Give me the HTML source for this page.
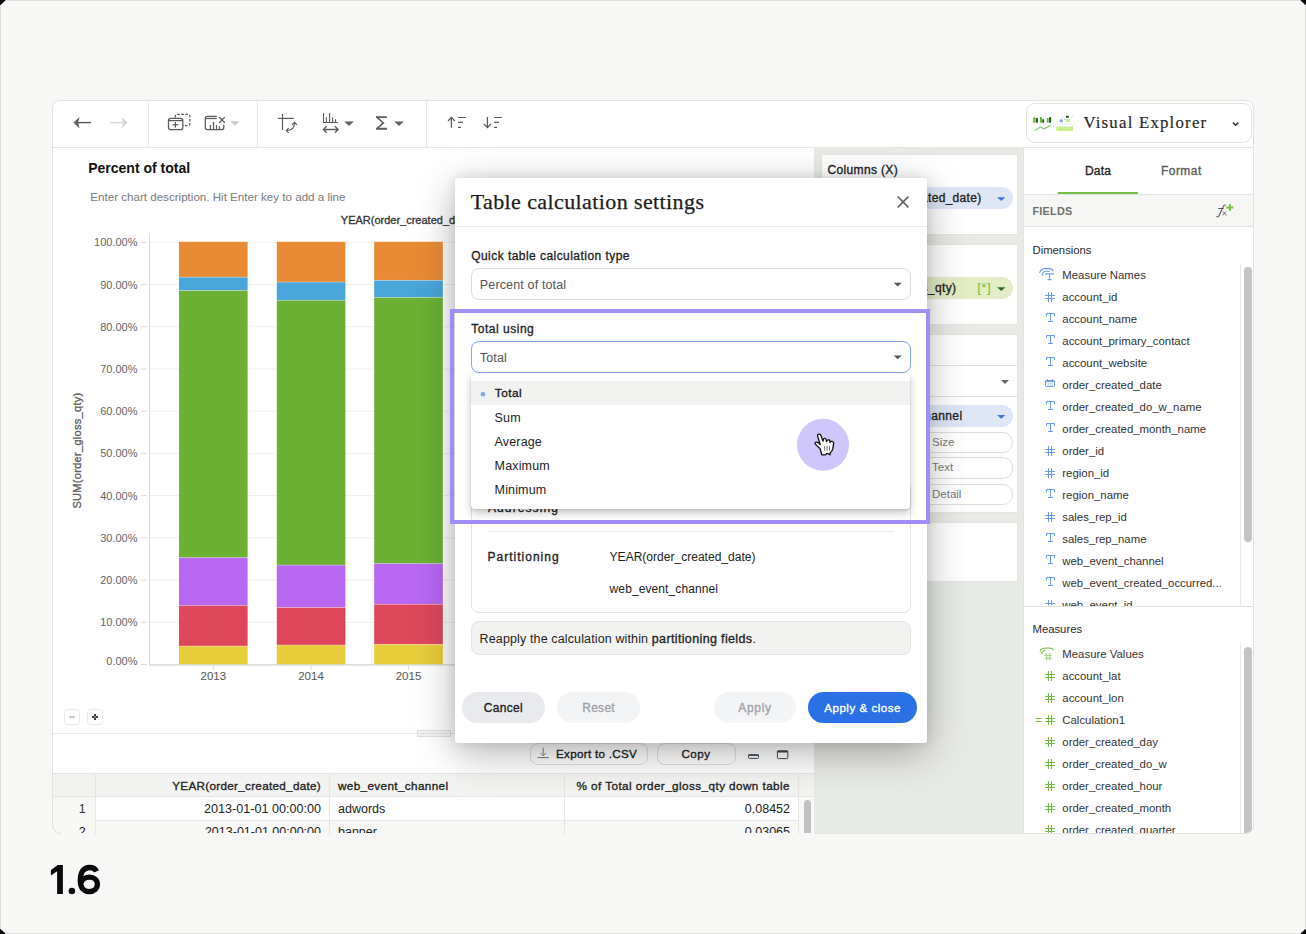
<!DOCTYPE html>
<html><head><meta charset="utf-8">
<style>
*{box-sizing:border-box;margin:0;padding:0}
html,body{width:1306px;height:934px;overflow:hidden;background:#000}
body{font-family:"Liberation Sans",sans-serif;color:#222;position:relative}
.a{position:absolute}
.t{position:absolute;white-space:nowrap;line-height:1}
svg{position:absolute;overflow:visible}
</style></head>
<body>

<div class="a" style="left:0px;top:0px;width:1306px;height:934px;background:#f7f7f5;border:1px solid #dcdedb;clip-path:polygon(6px 0,1300px 0,1306px 5.5px,1306px 928.5px,1300px 934px,6px 934px,0 928.5px,0 5.5px)"></div>
<svg style="left:0;top:0" width="120" height="934">
 <path d="M50.9 869.9 L57.9 865.1 L62.9 865.1 L62.9 894 L57.1 894 L57.1 871.3 L50.9 875.4 Z" fill="#0a0a0a"/>
 <circle cx="71.9" cy="891" r="3.3" fill="#0a0a0a"/>
 <path d="M96.6 871.4 C95.2 868.6 92.6 867.5 89.4 867.5 C83.3 867.5 80.3 872.6 80.3 880.5 C80.3 888 83.8 891.6 89 891.6 C94.2 891.6 97.4 888.3 97.4 884.3 C97.4 880 94.3 877.1 89.5 877.1 C85.5 877.1 82 879.5 80.9 883" fill="none" stroke="#0a0a0a" stroke-width="5.3"/>
</svg>
<div class="a" style="left:52px;top:100px;width:1202px;height:734px;background:#fff;border:1px solid #e1e3df;border-radius:8px"></div>
<div class="a" style="left:53px;top:147px;width:1200px;height:1px;background:#e6e7e3"></div>
<div class="a" style="left:148px;top:101px;width:1px;height:46px;background:#e6e7e3"></div>
<div class="a" style="left:257px;top:101px;width:1px;height:46px;background:#e6e7e3"></div>
<div class="a" style="left:426px;top:101px;width:1px;height:46px;background:#e6e7e3"></div>
<div class="a" style="left:1026px;top:103px;width:226px;height:40px;border:1px solid #e1e3df;border-radius:9px;background:#fff"></div>
<div class="t" style="top:114.73px;font-size:16.8px;color:#262626;letter-spacing:1.22px;font-family:'Liberation Serif',serif;left:1083.4px;-webkit-text-stroke:0.15px #262626;">Visual Explorer</div>
<svg style="left:0;top:0" width="1306" height="150">
 <path d="M1233 122.6 L1235.7 125.3 L1238.4 122.6" fill="none" stroke="#333" stroke-width="1.5"/>
 <line x1="1031" y1="123.9" x2="1076" y2="123.9" stroke="#eeefec" stroke-width="0.8"/>
 <line x1="1053.3" y1="115.2" x2="1053.3" y2="131" stroke="#eeefec" stroke-width="0.8"/>
 <g fill="#62bd33"><rect x="1033.2" y="117.2" width="2" height="5.5"/><rect x="1040" y="117" width="2" height="5.7"/><rect x="1046.7" y="118" width="1.9" height="4.7"/></g>
 <g fill="#1d4f26"><rect x="1035.8" y="118" width="2" height="4.7"/><rect x="1042.3" y="119.2" width="1.8" height="3.5"/><rect x="1049.1" y="117.2" width="2" height="5.5"/></g>
 <path d="M1036 130.3 L1040.4 125.6 L1045.1 130.3 L1049.9 125.1" fill="none" stroke="#cfdcf6" stroke-width="0.8"/>
 <path d="M1034.4 130.5 L1040.4 127.3 L1044 128.7 L1050.7 125.5" fill="none" stroke="#63bd35" stroke-width="0.9"/>
 <rect x="1059.7" y="119.4" width="3" height="2.9" fill="#7ea6f0"/>
 <g fill="#a9c4f4"><circle cx="1057.5" cy="121.5" r="0.6"/><circle cx="1062.5" cy="117.4" r="0.6"/><circle cx="1064.5" cy="119.4" r="0.6"/><circle cx="1072.2" cy="116.2" r="0.6"/></g>
 <rect x="1066" y="115.8" width="2.8" height="2" fill="#1d5a28"/>
 <rect x="1066" y="119" width="3.8" height="3" fill="#c6ed7c"/>
 <path d="M1056.3 131 V127 L1057.5 125.8 L1058.5 127.5 L1059.8 125.6 L1061 127.3 L1062.3 125.8 L1063.5 127.6 L1065 125.9 L1066.3 127.4 L1067.6 125.7 L1068.8 127.5 L1070.2 125.8 L1071.5 127.2 L1073 125.5 V131 Z" fill="#c9ee85"/>
</svg>
<div class="t" style="top:161.15px;font-size:14px;font-weight:700;color:#111;left:88.2px;">Percent of total</div>
<div class="t" style="top:191.18px;font-size:11.6px;color:#7a7a7a;left:90.3px;">Enter chart description. Hit Enter key to add a line</div>
<!-- chart -->
<svg class="a" style="left:0;top:0" width="814" height="734" viewBox="0 0 814 734">
 <text x="340.8" y="223.5" font-size="11" fill="#333" stroke="#333" stroke-width="0.3">YEAR(order_created_date)</text>
 <g stroke="#efefef" stroke-width="1"><line x1="150" y1="664.5" x2="814" y2="664.5"/><line x1="150" y1="622.3" x2="814" y2="622.3"/><line x1="150" y1="580.1" x2="814" y2="580.1"/><line x1="150" y1="537.8" x2="814" y2="537.8"/><line x1="150" y1="495.6" x2="814" y2="495.6"/><line x1="150" y1="453.4" x2="814" y2="453.4"/><line x1="150" y1="411.2" x2="814" y2="411.2"/><line x1="150" y1="369.0" x2="814" y2="369.0"/><line x1="150" y1="326.7" x2="814" y2="326.7"/><line x1="150" y1="284.5" x2="814" y2="284.5"/><line x1="150" y1="242.3" x2="814" y2="242.3"/></g>
 <g stroke="#dcdcdc" stroke-width="1">
  <line x1="141" y1="664.5" x2="147" y2="664.5"/><line x1="141" y1="622.3" x2="147" y2="622.3"/><line x1="141" y1="580.1" x2="147" y2="580.1"/><line x1="141" y1="537.8" x2="147" y2="537.8"/><line x1="141" y1="495.6" x2="147" y2="495.6"/><line x1="141" y1="453.4" x2="147" y2="453.4"/><line x1="141" y1="411.2" x2="147" y2="411.2"/><line x1="141" y1="369.0" x2="147" y2="369.0"/><line x1="141" y1="326.7" x2="147" y2="326.7"/><line x1="141" y1="284.5" x2="147" y2="284.5"/><line x1="141" y1="242.3" x2="147" y2="242.3"/>
 </g>
 <line x1="149.5" y1="233.5" x2="149.5" y2="665.5" stroke="#d9d9d9" stroke-width="1"/>
 <rect x="179" y="241.8" width="68.6" height="35.4" fill="#e98b35"/><rect x="179" y="277.2" width="68.6" height="13.3" fill="#4aa5da"/><rect x="179" y="290.5" width="68.6" height="267.1" fill="#6cb034"/><rect x="179" y="557.6" width="68.6" height="47.8" fill="#b767f2"/><rect x="179" y="605.4" width="68.6" height="40.7" fill="#de475b"/><rect x="179" y="646.1" width="68.6" height="18.4" fill="#e7cd3a"/><line x1="179" y1="277.2" x2="247.6" y2="277.2" stroke="#ffffff" stroke-opacity="0.45" stroke-width="0.7"/><line x1="179" y1="290.5" x2="247.6" y2="290.5" stroke="#ffffff" stroke-opacity="0.45" stroke-width="0.7"/><line x1="179" y1="557.6" x2="247.6" y2="557.6" stroke="#ffffff" stroke-opacity="0.45" stroke-width="0.7"/><line x1="179" y1="605.4" x2="247.6" y2="605.4" stroke="#ffffff" stroke-opacity="0.45" stroke-width="0.7"/><line x1="179" y1="646.1" x2="247.6" y2="646.1" stroke="#ffffff" stroke-opacity="0.45" stroke-width="0.7"/><rect x="276.8" y="241.8" width="68.6" height="40.3" fill="#e98b35"/><rect x="276.8" y="282.1" width="68.6" height="18.2" fill="#4aa5da"/><rect x="276.8" y="300.3" width="68.6" height="264.8" fill="#6cb034"/><rect x="276.8" y="565.1" width="68.6" height="42.4" fill="#b767f2"/><rect x="276.8" y="607.5" width="68.6" height="37.5" fill="#de475b"/><rect x="276.8" y="645.0" width="68.6" height="19.5" fill="#e7cd3a"/><line x1="276.8" y1="282.1" x2="345.4" y2="282.1" stroke="#ffffff" stroke-opacity="0.45" stroke-width="0.7"/><line x1="276.8" y1="300.3" x2="345.4" y2="300.3" stroke="#ffffff" stroke-opacity="0.45" stroke-width="0.7"/><line x1="276.8" y1="565.1" x2="345.4" y2="565.1" stroke="#ffffff" stroke-opacity="0.45" stroke-width="0.7"/><line x1="276.8" y1="607.5" x2="345.4" y2="607.5" stroke="#ffffff" stroke-opacity="0.45" stroke-width="0.7"/><line x1="276.8" y1="645.0" x2="345.4" y2="645.0" stroke="#ffffff" stroke-opacity="0.45" stroke-width="0.7"/><rect x="374.2" y="241.8" width="68.6" height="38.6" fill="#e98b35"/><rect x="374.2" y="280.4" width="68.6" height="17.1" fill="#4aa5da"/><rect x="374.2" y="297.5" width="68.6" height="266.1" fill="#6cb034"/><rect x="374.2" y="563.6" width="68.6" height="40.7" fill="#b767f2"/><rect x="374.2" y="604.3" width="68.6" height="40.1" fill="#de475b"/><rect x="374.2" y="644.4" width="68.6" height="20.1" fill="#e7cd3a"/><line x1="374.2" y1="280.4" x2="442.79999999999995" y2="280.4" stroke="#ffffff" stroke-opacity="0.45" stroke-width="0.7"/><line x1="374.2" y1="297.5" x2="442.79999999999995" y2="297.5" stroke="#ffffff" stroke-opacity="0.45" stroke-width="0.7"/><line x1="374.2" y1="563.6" x2="442.79999999999995" y2="563.6" stroke="#ffffff" stroke-opacity="0.45" stroke-width="0.7"/><line x1="374.2" y1="604.3" x2="442.79999999999995" y2="604.3" stroke="#ffffff" stroke-opacity="0.45" stroke-width="0.7"/><line x1="374.2" y1="644.4" x2="442.79999999999995" y2="644.4" stroke="#ffffff" stroke-opacity="0.45" stroke-width="0.7"/>
 <line x1="149" y1="665" x2="814" y2="665" stroke="#cfcfcf" stroke-width="1.2"/>
 <g stroke="#dcdcdc"><line x1="213.3" y1="665" x2="213.3" y2="670"/><line x1="311" y1="665" x2="311" y2="670"/><line x1="408.5" y1="665" x2="408.5" y2="670"/></g>
 <g font-size="11" fill="#666" text-anchor="end"><text x="137.5" y="664.5">0.00%</text><text x="137.5" y="626.3">10.00%</text><text x="137.5" y="584.1">20.00%</text><text x="137.5" y="541.8">30.00%</text><text x="137.5" y="499.6">40.00%</text><text x="137.5" y="457.4">50.00%</text><text x="137.5" y="415.2">60.00%</text><text x="137.5" y="373.0">70.00%</text><text x="137.5" y="330.7">80.00%</text><text x="137.5" y="288.5">90.00%</text><text x="137.5" y="246.3">100.00%</text></g>
 <g font-size="11.5" fill="#555" text-anchor="middle"><text x="213.3" y="680">2013</text><text x="311" y="680">2014</text><text x="408.5" y="680">2015</text><text x="506" y="680">2016</text></g>
 <text transform="translate(81.2 450.5) rotate(-90)" font-size="11" fill="#5e5e5e" stroke="#5e5e5e" stroke-width="0.3" letter-spacing="0.3" text-anchor="middle">SUM(order_gloss_qty)</text>
</svg>

<!-- toolbar icons -->
<svg class="a" style="left:0;top:0" width="1306" height="150" viewBox="0 0 1306 150">
 <g fill="none" stroke="#585b58" stroke-width="1.25" stroke-linecap="butt">
  <!-- back -->
  <line x1="76" y1="122.6" x2="91" y2="122.6" stroke-width="1.4"/>
  <path d="M79 117.8 L74 122.6 L79 127.6 L77.6 122.6 Z" fill="#5f625f" stroke-width="0.8" stroke-linejoin="round"/>
  <!-- forward -->
  <line x1="110" y1="122.6" x2="125" y2="122.6" stroke="#d6d7d4" stroke-width="1.4"/>
  <path d="M122.2 117.8 L127.2 122.6 L122.2 127.6 L123.6 122.6 Z" fill="#d6d7d4" stroke="#d6d7d4" stroke-width="0.8" stroke-linejoin="round"/>
  <!-- add sheet -->
  <rect x="168.5" y="118.3" width="14.3" height="11.3" rx="2.2"/>
  <line x1="169" y1="120.6" x2="182.5" y2="120.6"/>
  <line x1="172.6" y1="124.8" x2="178.2" y2="124.8"/>
  <line x1="175.4" y1="122" x2="175.4" y2="127.6"/>
  <path d="M175.3 117.5 V116.5 Q175.3 114.4 177.4 114.4 H187.8 Q189.9 114.4 189.9 116.5 V123.5 Q189.9 125.6 187.8 125.6 H183" stroke-dasharray="2.6 1.5"/>
  <!-- clear chart -->
  <path d="M216.8 116.3 H207.3 Q205.3 116.3 205.3 118.3 V127.6 Q205.3 129.6 207.3 129.6 H221.8 Q223.8 129.6 223.8 127.6 V124.8"/>
  <line x1="205.5" y1="118.5" x2="216.8" y2="118.5"/>
  <line x1="210.4" y1="125" x2="210.4" y2="129.4"/>
  <line x1="213.5" y1="122" x2="213.5" y2="129.4"/>
  <line x1="216.5" y1="125" x2="216.5" y2="129.4"/>
  <line x1="219.4" y1="126.2" x2="219.4" y2="129.4"/>
  <path d="M219.2 117.1 L224.8 122.7 M224.8 117.1 L219.2 122.7"/>
  <path d="M230.2 121.3 H239.7 L235 125.7 Z" fill="#c9cbc8" stroke="none"/>
  <!-- swap -->
  <line x1="278" y1="118.4" x2="293.8" y2="118.4" stroke-width="1.2"/>
  <line x1="282.5" y1="114" x2="282.5" y2="130" stroke-width="1.2"/>
  <path d="M286.8 130.5 C290.5 130.5 294.5 129.3 294.5 122.8" stroke-width="1.1"/>
  <path d="M292 124.8 L294.5 122.3 L297 124.8" stroke-width="1.2"/>
  <path d="M288.7 128.1 L286.3 130.5 L288.7 132.9" stroke-width="1.2"/>
  <!-- bars/arrows -->
  <path d="M323.5 113 V122.4 H338 M326.4 117.2 V122.4 M329.6 113 V122.4 M332.6 117.2 V122.4 M335.6 119 V122.4" stroke-width="1.05"/>
  <path d="M323.5 129.5 H338 M326.6 126.3 L323.4 129.5 L326.6 132.7 M334.9 126.3 L338.1 129.5 L334.9 132.7" stroke-width="1.3"/>
  <path d="M344.2 121.4 H353.8 L349 126 Z" fill="#5f625f" stroke="none"/>
  <!-- sigma -->
  <path d="M386.9 117.1 H376.6 M386.9 128.7 H376.6" stroke-width="1.9"/><path d="M376.2 116.6 L383.4 122.9 L376.2 129.2" stroke-width="1.5" stroke-linejoin="miter"/>
  <path d="M394.2 121.4 H403.8 L399 126 Z" fill="#5f625f" stroke="none"/>
  <!-- sort asc -->
  <path d="M451.4 117.6 V127.8 M448 121 L451.4 117.4 L454.9 121" stroke-width="1.2"/>
  <path d="M458.1 117.5 H466 M458.1 122.4 H462.9 M458.1 127.4 H461" stroke-width="1.1"/>
  <!-- sort desc -->
  <path d="M487.4 117.1 V127.4 M484 124 L487.4 127.6 L490.9 124" stroke-width="1.2"/>
  <path d="M494.1 117.5 H501.9 M494.1 122.4 H498.9 M494.1 127.4 H497" stroke-width="1.1"/>
 </g>
</svg>


<div class="a" style="left:814px;top:148px;width:209px;height:685px;background:#e8eae5"></div>
<div class="a" style="left:821px;top:154px;width:197px;height:81px;background:#fff;border:1px solid #e4e5e1"></div>
<div class="t" style="top:163.84px;font-size:12px;-webkit-text-stroke:0.33px #222;letter-spacing:0.362px;color:#222;left:827.4px;">Columns (X)</div>
<div class="a" style="left:820px;top:187px;width:193px;height:22px;background:#dfe7f7;border-radius:11px"></div>
<div class="t" style="top:191.84px;font-size:12px;-webkit-text-stroke:0.33px #222;letter-spacing:0.304px;color:#222;right:324.5px;">YEAR(order_created_date)</div>
<div class="a" style="left:821px;top:244px;width:197px;height:81px;background:#fff;border:1px solid #e4e5e1"></div>
<div class="t" style="top:253.84px;font-size:12px;-webkit-text-stroke:0.33px #222;letter-spacing:0.250px;color:#222;left:827.4px;">Rows (Y)</div>
<div class="a" style="left:820px;top:277px;width:193px;height:22px;background:#e3eec6;border-radius:11px"></div>
<div class="t" style="top:281.84px;font-size:12px;-webkit-text-stroke:0.33px #222;letter-spacing:0.399px;color:#222;right:349.5px;">SUM(order_gloss_qty)</div>
<div class="t" style="top:281.07px;font-size:13.5px;color:#72bd3c;letter-spacing:0.3px;left:977.3px;">[*]</div>
<div class="a" style="left:821px;top:334px;width:197px;height:179px;background:#fff;border:1px solid #e4e5e1"></div>
<div class="a" style="left:822px;top:365px;width:195px;height:1px;background:#e0e1dd"></div>
<div class="a" style="left:822px;top:396px;width:195px;height:1px;background:#e0e1dd"></div>
<div class="t" style="top:344.84px;font-size:12px;-webkit-text-stroke:0.33px #222;letter-spacing:0.403px;color:#222;left:827.4px;">Marks</div>
<div class="t" style="top:375.84px;font-size:12px;color:#444;left:832px;">Automatic</div>
<div class="a" style="left:820px;top:405px;width:193px;height:22px;background:#dfe7f7;border-radius:11px"></div>
<div class="t" style="top:409.84px;font-size:12px;-webkit-text-stroke:0.33px #222;letter-spacing:0.390px;color:#222;right:343.5px;">web_event_channel</div>
<div class="a" style="left:880px;top:431.5px;width:133px;height:21.5px;background:#fff;border:1px solid #dcdddb;border-radius:10px"></div>
<div class="t" style="top:436.77px;font-size:11.5px;color:#7a7a7a;left:932px;">Size</div>
<div class="a" style="left:880px;top:457px;width:133px;height:21.5px;background:#fff;border:1px solid #dcdddb;border-radius:10px"></div>
<div class="t" style="top:462.27px;font-size:11.5px;color:#7a7a7a;left:932px;">Text</div>
<div class="a" style="left:880px;top:483.5px;width:133px;height:21.5px;background:#fff;border:1px solid #dcdddb;border-radius:10px"></div>
<div class="t" style="top:488.77px;font-size:11.5px;color:#7a7a7a;left:932px;">Detail</div>
<div class="a" style="left:821px;top:522px;width:197px;height:60px;background:#fff;border:1px solid #e4e5e1"></div>
<svg style="left:0;top:0" width="1306" height="934">
 <path d="M997 197.2 H1005.4 L1001.2 201 Z" fill="#3d77d6"/>
 <path d="M997 287.2 H1005.4 L1001.2 291 Z" fill="#2d6e1e"/>
 <path d="M1001 380 H1009 L1005 384 Z" fill="#666"/>
 <path d="M997 415 H1005.4 L1001.2 418.8 Z" fill="#3d77d6"/>
</svg>
<div class="a" style="left:1023px;top:148px;width:230px;height:685px;background:#fff;border-left:1px solid #e1e3df"></div>
<div class="t" style="top:164.64px;font-size:12px;-webkit-text-stroke:0.33px #222;letter-spacing:0.164px;color:#222;left:1085px;">Data</div>
<div class="t" style="top:164.64px;font-size:12px;-webkit-text-stroke:0.33px #5a5a5a;letter-spacing:0.443px;color:#5a5a5a;left:1161px;">Format</div>
<div class="a" style="left:1058px;top:192px;width:80px;height:2.2px;background:#74c043"></div>
<div class="a" style="left:1024px;top:194px;width:229px;height:1px;background:#e1e3df"></div>
<div class="a" style="left:1024px;top:195px;width:229px;height:32px;background:#f6f6f4;border-bottom:1px solid #e1e3df"></div>
<div class="t" style="top:206.06px;font-size:10.8px;font-weight:700;color:#6e706e;letter-spacing:0.25px;left:1032.5px;">FIELDS</div>
<div class="t" style="top:245.23px;font-size:11.3px;color:#2a2a2a;left:1032.5px;">Dimensions</div>
<div class="t" style="top:624.43px;font-size:11.3px;color:#2a2a2a;left:1032.5px;">Measures</div>
<div class="a" style="left:1240px;top:263.5px;width:13px;height:342px;background:#fff;border-left:1px solid #e8e9e6"></div>
<div class="a" style="left:1244px;top:266.5px;width:7.5px;height:275px;background:#c4c4c4;border-radius:4px"></div>
<div class="a" style="left:1024px;top:606px;width:229px;height:1px;background:#e1e3df"></div>
<div class="a" style="left:1240px;top:643px;width:13px;height:190px;background:#fff;border-left:1px solid #e8e9e6"></div>
<div class="a" style="left:1244px;top:646.5px;width:7.5px;height:186.5px;background:#c4c4c4;border-radius:4px 4px 0 0"></div>
<div class="a" style="left:1024px;top:263.5px;width:216px;height:342px;overflow:hidden">
<div class="t" style="left:38.299999999999955px;top:6.65px;font-size:11.4px;color:#333">Measure Names</div>
<div class="t" style="left:38.299999999999955px;top:28.65px;font-size:11.4px;color:#333">account_id</div>
<div class="t" style="left:38.299999999999955px;top:50.65px;font-size:11.4px;color:#333">account_name</div>
<div class="t" style="left:38.299999999999955px;top:72.65px;font-size:11.4px;color:#333">account_primary_contact</div>
<div class="t" style="left:38.299999999999955px;top:94.65px;font-size:11.4px;color:#333">account_website</div>
<div class="t" style="left:38.299999999999955px;top:116.65px;font-size:11.4px;color:#333">order_created_date</div>
<div class="t" style="left:38.299999999999955px;top:138.65px;font-size:11.4px;color:#333">order_created_do_w_name</div>
<div class="t" style="left:38.299999999999955px;top:160.65px;font-size:11.4px;color:#333">order_created_month_name</div>
<div class="t" style="left:38.299999999999955px;top:182.65px;font-size:11.4px;color:#333">order_id</div>
<div class="t" style="left:38.299999999999955px;top:204.65px;font-size:11.4px;color:#333">region_id</div>
<div class="t" style="left:38.299999999999955px;top:226.65px;font-size:11.4px;color:#333">region_name</div>
<div class="t" style="left:38.299999999999955px;top:248.65px;font-size:11.4px;color:#333">sales_rep_id</div>
<div class="t" style="left:38.299999999999955px;top:270.65px;font-size:11.4px;color:#333">sales_rep_name</div>
<div class="t" style="left:38.299999999999955px;top:292.65px;font-size:11.4px;color:#333">web_event_channel</div>
<div class="t" style="left:38.299999999999955px;top:314.65px;font-size:11.4px;color:#333">web_event_created_occurred...</div>
<div class="t" style="left:38.299999999999955px;top:336.65px;font-size:11.4px;color:#333">web_event_id</div>
</div>
<div class="a" style="left:1024px;top:643px;width:216px;height:190px;overflow:hidden">
<div class="t" style="left:38.299999999999955px;top:6.15px;font-size:11.4px;color:#333">Measure Values</div>
<div class="t" style="left:38.299999999999955px;top:28.15px;font-size:11.4px;color:#333">account_lat</div>
<div class="t" style="left:38.299999999999955px;top:50.15px;font-size:11.4px;color:#333">account_lon</div>
<div class="t" style="left:38.299999999999955px;top:72.15px;font-size:11.4px;color:#333">Calculation1</div>
<div class="t" style="left:38.299999999999955px;top:94.15px;font-size:11.4px;color:#333">order_created_day</div>
<div class="t" style="left:38.299999999999955px;top:116.15px;font-size:11.4px;color:#333">order_created_do_w</div>
<div class="t" style="left:38.299999999999955px;top:138.15px;font-size:11.4px;color:#333">order_created_hour</div>
<div class="t" style="left:38.299999999999955px;top:160.15px;font-size:11.4px;color:#333">order_created_month</div>
<div class="t" style="left:38.299999999999955px;top:182.15px;font-size:11.4px;color:#333">order_created_quarter</div>
</div>
<svg style="left:0;top:0" width="1306" height="934">
 <defs><clipPath id="cd"><rect x="1024" y="263.5" width="216" height="342"/></clipPath><clipPath id="cm"><rect x="1024" y="643" width="216" height="190"/></clipPath></defs>
 <g clip-path="url(#cd)"><path d="M1046 275.0 V273.70000000000005 H1053.2 V275.0 M1049.6 273.70000000000005 V279.6 M1047.6 279.6 H1051.6" stroke="#6b9cee" stroke-width="1.05" fill="none"/><path d="M1039.6 273.0 Q1040.5 268.6 1045.5 268.6 H1049.5 Q1052.5 268.6 1053.2 270.8 M1042 275.6 Q1042.3 271.40000000000003 1046 271.20000000000005 H1050" stroke="#6b9cee" stroke-width="1.05" fill="none"/><path d="M1048.5 292 V302 M1051.5 292 V302 M1045 295.5 H1055 M1045 298.5 H1055" stroke="#6b9cee" stroke-width="1" fill="none"/><path d="M1046.5 316.2 V313.5 H1054.5 V316.2 M1050.5 313.5 V321.5 M1048 321.5 H1053" stroke="#6b9cee" stroke-width="1" fill="none"/><path d="M1046.5 338.2 V335.5 H1054.5 V338.2 M1050.5 335.5 V343.5 M1048 343.5 H1053" stroke="#6b9cee" stroke-width="1" fill="none"/><path d="M1046.5 360.2 V357.5 H1054.5 V360.2 M1050.5 357.5 V365.5 M1048 365.5 H1053" stroke="#6b9cee" stroke-width="1" fill="none"/><rect x="1045.5" y="380.5" width="9" height="6.0" rx="1" stroke="#6b9cee" stroke-width="1" fill="none"/><line x1="1045.5" y1="381.5" x2="1054.5" y2="381.5" stroke="#6b9cee" stroke-width="1"/><path d="M1047.5 379.0 V380.5 M1052.5 379.0 V380.5" stroke="#6b9cee" stroke-width="1"/><g fill="#6b9cee"><rect x="1047.6" y="382.7" width="1" height="1"/><rect x="1049.6" y="382.7" width="1" height="1"/><rect x="1051.6" y="382.7" width="1" height="1"/><rect x="1047.6" y="384.5" width="1" height="1"/><rect x="1049.6" y="384.5" width="1" height="1"/><rect x="1051.6" y="384.5" width="1" height="1"/></g><path d="M1046.5 404.2 V401.5 H1054.5 V404.2 M1050.5 401.5 V409.5 M1048 409.5 H1053" stroke="#6b9cee" stroke-width="1" fill="none"/><path d="M1046.5 426.2 V423.5 H1054.5 V426.2 M1050.5 423.5 V431.5 M1048 431.5 H1053" stroke="#6b9cee" stroke-width="1" fill="none"/><path d="M1048.5 446 V456 M1051.5 446 V456 M1045 449.5 H1055 M1045 452.5 H1055" stroke="#6b9cee" stroke-width="1" fill="none"/><path d="M1048.5 468 V478 M1051.5 468 V478 M1045 471.5 H1055 M1045 474.5 H1055" stroke="#6b9cee" stroke-width="1" fill="none"/><path d="M1046.5 492.2 V489.5 H1054.5 V492.2 M1050.5 489.5 V497.5 M1048 497.5 H1053" stroke="#6b9cee" stroke-width="1" fill="none"/><path d="M1048.5 512 V522 M1051.5 512 V522 M1045 515.5 H1055 M1045 518.5 H1055" stroke="#6b9cee" stroke-width="1" fill="none"/><path d="M1046.5 536.2 V533.5 H1054.5 V536.2 M1050.5 533.5 V541.5 M1048 541.5 H1053" stroke="#6b9cee" stroke-width="1" fill="none"/><path d="M1046.5 558.2 V555.5 H1054.5 V558.2 M1050.5 555.5 V563.5 M1048 563.5 H1053" stroke="#6b9cee" stroke-width="1" fill="none"/><path d="M1046.5 580.2 V577.5 H1054.5 V580.2 M1050.5 577.5 V585.5 M1048 585.5 H1053" stroke="#6b9cee" stroke-width="1" fill="none"/><path d="M1048.5 600 V610 M1051.5 600 V610 M1045 603.5 H1055 M1045 606.5 H1055" stroke="#6b9cee" stroke-width="1" fill="none"/></g>
 <g clip-path="url(#cm)"><path d="M1046.7 653.0999999999999 V660.5999999999999 M1049.7 653.0999999999999 V660.5999999999999 M1044.5 655.4999999999999 H1052 M1044.5 658.1999999999999 H1052" stroke="#a5d982" stroke-width="1.1" fill="none"/><path d="M1040 651.5999999999999 Q1040.5 647.9999999999999 1046.5 647.9999999999999 H1049 Q1053 647.9999999999999 1053.3 650.3 M1041.8 654.0999999999999 Q1042 650.3999999999999 1045.5 650.1999999999999" stroke="#72bf40" stroke-width="1.1" fill="none"/><path d="M1048.5 671 V681 M1051.5 671 V681 M1045 674.5 H1055 M1045 677.5 H1055" stroke="#72bf40" stroke-width="1" fill="none"/><path d="M1048.5 693 V703 M1051.5 693 V703 M1045 696.5 H1055 M1045 699.5 H1055" stroke="#72bf40" stroke-width="1" fill="none"/><path d="M1048.5 715 V725 M1051.5 715 V725 M1045 718.5 H1055 M1045 721.5 H1055" stroke="#72bf40" stroke-width="1" fill="none"/><path d="M1035.8 718.5 H1041.8 M1035.8 721.5 H1041.8" stroke="#72bf40" stroke-width="1"/><path d="M1048.5 737 V747 M1051.5 737 V747 M1045 740.5 H1055 M1045 743.5 H1055" stroke="#72bf40" stroke-width="1" fill="none"/><path d="M1048.5 759 V769 M1051.5 759 V769 M1045 762.5 H1055 M1045 765.5 H1055" stroke="#72bf40" stroke-width="1" fill="none"/><path d="M1048.5 781 V791 M1051.5 781 V791 M1045 784.5 H1055 M1045 787.5 H1055" stroke="#72bf40" stroke-width="1" fill="none"/><path d="M1048.5 803 V813 M1051.5 803 V813 M1045 806.5 H1055 M1045 809.5 H1055" stroke="#72bf40" stroke-width="1" fill="none"/><path d="M1048.5 825 V835 M1051.5 825 V835 M1045 828.5 H1055 M1045 831.5 H1055" stroke="#72bf40" stroke-width="1" fill="none"/></g>
 <path d="M1216.5 216.3 Q1218.3 217.8 1219.6 214.5 L1223.3 206.5 Q1224.4 204.4 1225.8 205.2" stroke="#5a5d5a" stroke-width="1.1" fill="none"/>
 <path d="M1218.2 208.5 H1223.7" stroke="#5a5d5a" stroke-width="1"/>
 <path d="M1222.8 211.5 L1226.5 215.2 M1226 211.5 L1222.6 215.4" stroke="#5a5d5a" stroke-width="0.9"/>
 <path d="M1226.5 207.6 H1233.3 M1229.9 204.2 V211" stroke="#74c043" stroke-width="2"/>
</svg>
<div class="a" style="left:53px;top:733px;width:761px;height:1px;background:#e8e9e5"></div>
<div class="a" style="left:64px;top:709px;width:16px;height:16px;border:1px solid #e6e8e4;border-radius:3.5px;background:#fff"></div>
<div class="a" style="left:87px;top:709px;width:16px;height:16px;border:1px solid #e6e8e4;border-radius:3.5px;background:#fff"></div>
<svg style="left:0;top:0" width="1306" height="934">
 <rect x="69" y="716" width="6" height="2" fill="#c9c9c9"/>
 <g fill="#3a3a3a"><rect x="94" y="714" width="2" height="2"/><rect x="94" y="718" width="2" height="2"/><rect x="92" y="716" width="2" height="2"/><rect x="96" y="716" width="2" height="2"/></g>
 <rect x="94" y="716" width="2" height="2" fill="#888"/>
 <rect x="417.5" y="730.5" width="33" height="6" fill="#f4f4f2" stroke="#d8d9d6" stroke-width="0.8"/>
 <path d="M420 733.5 H448" stroke="#c9cac7" stroke-width="0.8" stroke-dasharray="1.5 1"/>
</svg>
<div class="a" style="left:529.5px;top:743px;width:118px;height:21.5px;border:1px solid #dcdddb;border-radius:8px;background:#fff"></div>
<div class="t" style="top:747.98px;font-size:11.6px;-webkit-text-stroke:0.33px #222;letter-spacing:0.320px;color:#222;left:556px;">Export to .CSV</div>
<div class="a" style="left:656.5px;top:743px;width:79px;height:21.5px;border:1px solid #dcdddb;border-radius:8px;background:#fff"></div>
<div class="t" style="top:747.98px;font-size:11.6px;-webkit-text-stroke:0.33px #222;letter-spacing:0.477px;color:#222;left:396px;width:600px;text-align:center;">Copy</div>
<svg style="left:0;top:0" width="1306" height="934">
 <path d="M543.2 747.6 V755.5 M540.4 753 L543.2 755.8 L546 753" stroke="#777" stroke-width="0.9" fill="none"/>
 <line x1="537.6" y1="757.6" x2="548.8" y2="757.6" stroke="#777" stroke-width="1"/>
 <rect x="748.5" y="754.6" width="10" height="3.8" rx="1" fill="none" stroke="#404a5a" stroke-width="1"/>
 <line x1="748.5" y1="755.2" x2="758.5" y2="755.2" stroke="#404a5a" stroke-width="1.4"/>
 <rect x="777.4" y="750.8" width="10.4" height="7.8" rx="1" fill="none" stroke="#404a5a" stroke-width="1"/>
 <line x1="777.4" y1="751.6" x2="787.8" y2="751.6" stroke="#404a5a" stroke-width="1.8"/>
</svg>
<div class="a" style="left:53px;top:772.5px;width:761px;height:24px;background:#f3f4f1;border-top:1px solid #e6e7e3;border-bottom:1px solid #e6e7e3"></div>
<div class="a" style="left:53px;top:796.5px;width:761px;height:23px;background:#fff"></div>
<div class="a" style="left:53px;top:819.5px;width:761px;height:14px;background:#f7f7f5;border-top:1px solid #e8e9e5"></div>
<div class="a" style="left:53px;top:796.5px;width:41.8px;height:37px;background:#f7f7f5"></div>
<div class="a" style="left:94.5px;top:772.5px;width:1px;height:61px;background:#e6e7e3"></div>
<div class="a" style="left:329px;top:772.5px;width:1px;height:61px;background:#e6e7e3"></div>
<div class="a" style="left:564.3px;top:772.5px;width:1px;height:61px;background:#e6e7e3"></div>
<div class="a" style="left:798.4px;top:772.5px;width:1px;height:61px;background:#e6e7e3"></div>
<div class="a" style="left:799px;top:796.5px;width:15px;height:37px;background:#f8f8f6"></div>
<div class="a" style="left:803.6px;top:800.2px;width:7.2px;height:32.8px;background:#c1c1c1;border-radius:4px 4px 0 0"></div>
<div class="t" style="top:780.10px;font-size:11.7px;-webkit-text-stroke:0.33px #222;letter-spacing:0.296px;color:#222;right:985px;">YEAR(order_created_date)</div>
<div class="t" style="top:780.10px;font-size:11.7px;-webkit-text-stroke:0.33px #222;letter-spacing:0.380px;color:#222;left:338px;">web_event_channel</div>
<div class="t" style="top:780.10px;font-size:11.7px;-webkit-text-stroke:0.33px #222;letter-spacing:0.436px;color:#222;right:516px;">% of Total order_gloss_qty down table</div>
<div class="t" style="top:802.62px;font-size:12.5px;color:#333;right:1220.4px;">1</div>
<div class="t" style="top:802.53px;font-size:12.6px;color:#222;right:985px;">2013-01-01 00:00:00</div>
<div class="t" style="top:802.62px;font-size:12.5px;color:#222;left:338px;">adwords</div>
<div class="t" style="top:802.62px;font-size:12.5px;color:#222;right:516px;">0.08452</div>
<div class="a" style="left:53px;top:820px;width:746px;height:13px;overflow:hidden">
<div class="t" style="right:713.4px;top:5.62px;font-size:12.5px;color:#222">2</div>
<div class="t" style="right:478px;top:5.62px;font-size:12.5px;color:#222">2013-01-01 00:00:00</div>
<div class="t" style="left:285px;top:5.62px;font-size:12.5px;color:#222">banner</div>
<div class="t" style="right:9px;top:5.62px;font-size:12.5px;color:#222">0.03065</div>
</div>
<svg style="left:0;top:0" width="1306" height="934">
 <path d="M51 825.5 L52.5 825.5 A8 8 0 0 0 60.5 833.5 L60.5 835 L51 835 Z" fill="#f7f7f5"/>
 <path d="M52.5 825 A8.5 8.5 0 0 0 61 833.5" stroke="#dfe1dd" fill="none"/>
 <path d="M1255 825.5 L1253.5 825.5 A8 8 0 0 1 1245.5 833.5 L1245.5 835 L1255 835 Z" fill="#f7f7f5"/>
 <path d="M1253.5 825 A8.5 8.5 0 0 1 1245 833.5" stroke="#dfe1dd" fill="none"/>
</svg>
<div class="a" style="left:455px;top:178px;width:472px;height:565px;background:#fff;border-radius:2px;box-shadow:0 10px 40px rgba(0,0,0,0.30),0 0 12px rgba(0,0,0,0.10)"></div>
<div class="a" style="left:455px;top:226px;width:472px;height:1px;background:#e8e9e5"></div>
<div class="t" style="top:191.17px;font-size:22px;color:#1c1c1c;letter-spacing:0.4px;font-family:'Liberation Serif',serif;left:470.7px;-webkit-text-stroke:0.25px #1c1c1c;">Table calculation settings</div>
<svg style="left:0;top:0" width="1306" height="934">
 <path d="M897.8 196.6 L908.4 207.4 M908.4 196.6 L897.8 207.4" stroke="#606360" stroke-width="1.5"/>
</svg>
<div class="t" style="top:249.64px;font-size:12px;-webkit-text-stroke:0.33px #1f1f1f;letter-spacing:0.451px;color:#1f1f1f;left:471.2px;">Quick table calculation type</div>
<div class="a" style="left:471px;top:268.3px;width:440px;height:31.6px;border:1px solid #dcdddb;border-radius:8px;background:#fff"></div>
<div class="t" style="top:279.12px;font-size:12.5px;color:#555;letter-spacing:0.15px;left:479.8px;">Percent of total</div>
<div class="t" style="top:322.64px;font-size:12px;-webkit-text-stroke:0.33px #1f1f1f;letter-spacing:0.521px;color:#1f1f1f;left:471.2px;">Total using</div>
<div class="a" style="left:471px;top:341.2px;width:440px;height:31.4px;border:1px solid #7fa6ef;border-radius:8px;background:#fff"></div>
<div class="t" style="top:351.92px;font-size:12.5px;color:#555;letter-spacing:0.15px;left:479.8px;">Total</div>
<div class="a" style="left:471px;top:480px;width:440px;height:133px;border:1px solid #e3e4e1;border-radius:8px;background:#fff"></div>
<div class="t" style="top:502.24px;font-size:12px;-webkit-text-stroke:0.33px #222;letter-spacing:1.097px;color:#222;left:488px;">Addressing</div>
<div class="a" style="left:487.6px;top:531px;width:406.7px;height:1px;background:#e8e9e5"></div>
<div class="t" style="top:551.34px;font-size:12px;-webkit-text-stroke:0.33px #222;letter-spacing:1.001px;color:#222;left:487.6px;">Partitioning</div>
<div class="t" style="top:551.34px;font-size:12px;color:#222;letter-spacing:0.02px;left:609.6px;">YEAR(order_created_date)</div>
<div class="t" style="top:583.04px;font-size:12px;color:#222;letter-spacing:0.1px;left:609.6px;">web_event_channel</div>
<div class="a" style="left:471px;top:621px;width:440px;height:34px;border:1px solid #e4e5e2;border-radius:8px;background:#f3f4f1"></div>
<div class="t" style="top:633.22px;font-size:12.5px;color:#222;letter-spacing:0.13px;left:479.6px;">Reapply the calculation within <span style="letter-spacing:0.36px;-webkit-text-stroke:0.33px #222">partitioning fields</span>.</div>
<div class="a" style="left:462.2px;top:691.8px;width:82.4px;height:31.6px;background:#e8eaee;border-radius:16px"></div>
<div class="t" style="top:701.64px;font-size:12px;-webkit-text-stroke:0.33px #1c1c1c;letter-spacing:0.333px;color:#1c1c1c;left:203.39999999999998px;width:600px;text-align:center;">Cancel</div>
<div class="a" style="left:557.2px;top:691.8px;width:82.8px;height:31.6px;background:#f3f4f6;border-radius:16px"></div>
<div class="t" style="top:701.64px;font-size:12px;-webkit-text-stroke:0.33px #9da1a7;letter-spacing:0.266px;color:#9da1a7;left:298.6px;width:600px;text-align:center;">Reset</div>
<div class="a" style="left:713.7px;top:691.5px;width:82.4px;height:31.6px;background:#f3f4f6;border-radius:16px"></div>
<div class="t" style="top:701.64px;font-size:12px;-webkit-text-stroke:0.33px #9da1a7;letter-spacing:0.662px;color:#9da1a7;left:455px;width:600px;text-align:center;">Apply</div>
<div class="a" style="left:808.2px;top:691.5px;width:108.8px;height:31.6px;background:#2a71e7;border-radius:16px"></div>
<div class="t" style="top:701.98px;font-size:11.6px;-webkit-text-stroke:0.33px #fff;letter-spacing:0.494px;color:#fff;left:562.6px;width:600px;text-align:center;">Apply &amp; close</div>
<div class="a" style="left:471.2px;top:373.7px;width:439.2px;height:135px;background:#fff;border-radius:0 0 4px 4px;box-shadow:0 4px 8px rgba(0,0,0,0.22),0 1px 2px rgba(0,0,0,0.12)"></div>
<div class="a" style="left:471.2px;top:381px;width:439.2px;height:24px;background:#f2f3f1"></div>
<div class="t" style="top:387.61px;font-size:11.8px;-webkit-text-stroke:0.33px #1a1a1a;letter-spacing:0.478px;color:#1a1a1a;left:494.8px;">Total</div>
<div class="t" style="top:411.82px;font-size:12.5px;color:#222;letter-spacing:0.15px;left:494.6px;">Sum</div>
<div class="t" style="top:435.62px;font-size:12.5px;color:#222;letter-spacing:0.15px;left:494.6px;">Average</div>
<div class="t" style="top:459.62px;font-size:12.5px;color:#222;letter-spacing:0.15px;left:494.6px;">Maximum</div>
<div class="t" style="top:483.62px;font-size:12.5px;color:#222;letter-spacing:0.15px;left:494.6px;">Minimum</div>
<svg style="left:0;top:0" width="1306" height="934">
 <path d="M893.7 282.8 H901.7 L897.7 286.6 Z" fill="#555"/>
 <path d="M893.7 355.5 H901.7 L897.7 359.3 Z" fill="#555"/>
 <circle cx="483" cy="394.3" r="2.3" fill="#7aa5ef"/>
 <rect x="452" y="311" width="476" height="211" fill="none" stroke="#a28cfa" stroke-width="4"/>
 <circle cx="823" cy="444.8" r="26" fill="#cfc6fb"/>
 <g transform="translate(814.2 0) scale(1.16 1) translate(-814.2 0)"><path d="M819.3 448.6 L815.6 444.6 Q814.3 443 815.6 442.3 Q816.8 441.7 818.2 443.2 L819.4 444.6 L817.2 436.3 Q816.8 434.4 818.3 434.2 Q819.6 434 820.1 435.6 L821.8 441.3 L822 439.6 Q822.4 438.3 823.6 438.5 Q824.6 438.7 824.6 440.2 L824.8 441.6 L825.3 440.5 Q825.9 439.5 827 439.9 Q827.9 440.3 827.8 441.6 L827.8 442.4 L828.5 441.6 Q829.4 441 830.3 441.6 Q831.2 442.3 830.9 444 L830.3 448.4 Q829.8 451.4 828 452.8 L827.8 454.8 L825.4 453.3 L823.8 454.8 L820.8 454.8 Z" fill="#fff" stroke="#111" stroke-width="1.2" stroke-linejoin="round"/>
 <path d="M823.2 446 V450.8 M825.3 446 V450.8 M827.4 446 V450.8" stroke="#777" stroke-width="0.9"/></g>
</svg>
</body></html>
